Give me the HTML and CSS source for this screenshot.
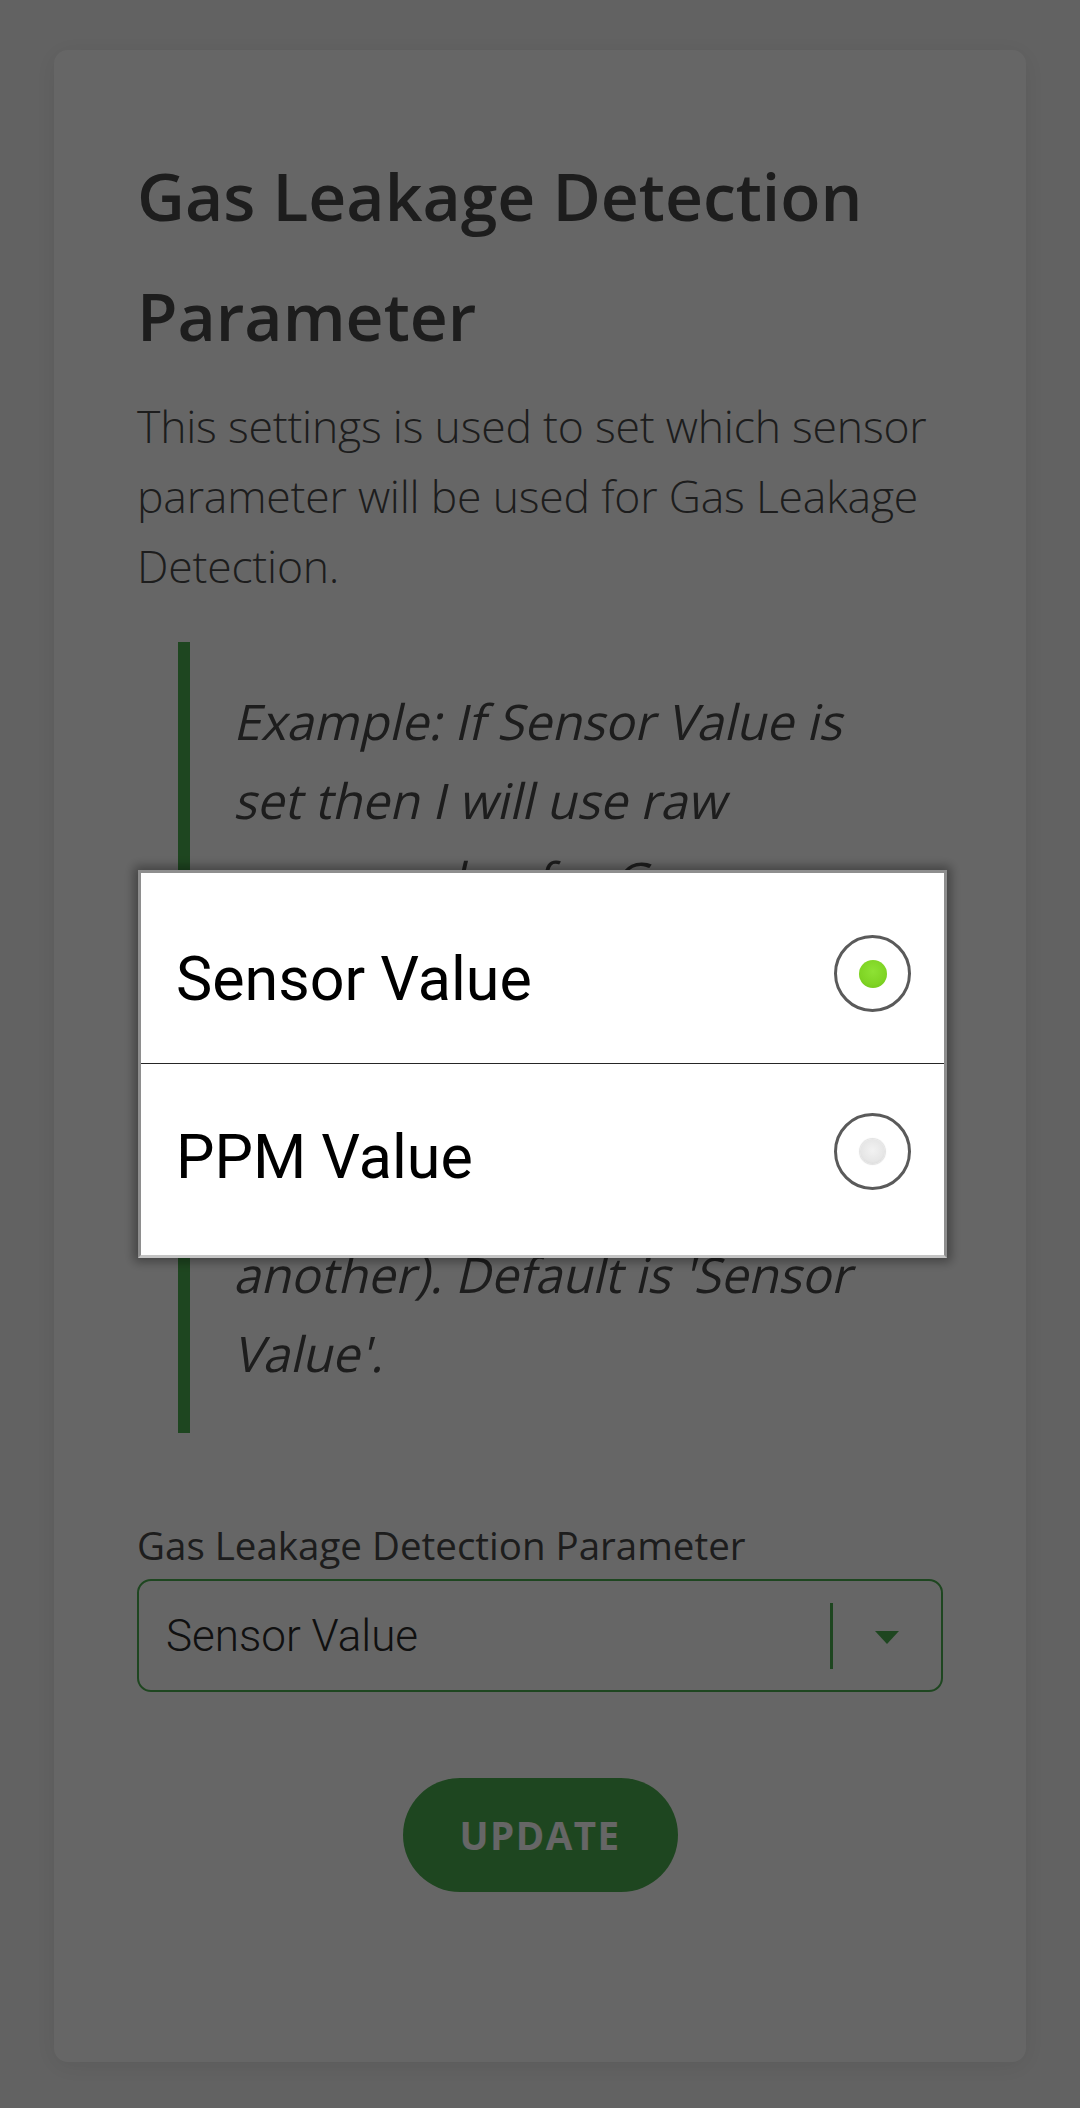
FILE: index.html
```html
<!DOCTYPE html>
<html lang="en">
<head>
<meta charset="utf-8">
<title>Gas Leakage Detection Parameter</title>
<link rel="stylesheet" href="styles.css">
</head>
<body>
<main class="page">
  <section class="card">
    <h1 class="title">Gas Leakage Detection Parameter</h1>
    <p class="lead">This settings is used to set which sensor parameter will be used for Gas Leakage Detection.</p>
    <blockquote class="note">
      <p class="note-text">
        <span class="line">Example: If Sensor Value is</span>
        <span class="line">set then I will use raw</span>
        <span class="line">sensor value for Gas</span>
        <span class="line">Leakage Detection and if</span>
        <span class="line">PPM Value is set then I will</span>
        <span class="line">use PPM value (converted</span>
        <span class="line">from one unit of gas to</span>
        <span class="line">another). Default is 'Sensor</span>
        <span class="line">Value'.</span>
      </p>
    </blockquote>
    <label class="field-label">Gas Leakage Detection Parameter</label>
    <div class="select">
      <span class="select-value">Sensor Value</span>
      <span class="select-sep"></span>
      <span class="select-arrow"></span>
    </div>
    <div class="actions">
      <button class="btn" type="button">UPDATE</button>
    </div>
  </section>
</main>
<div class="overlay">
  <div class="dialog">
    <div class="option">
      <span class="option-text">Sensor Value</span>
      <span class="radio radio-on"><span class="radio-dot"></span></span>
    </div>
    <div class="divider"></div>
    <div class="option">
      <span class="option-text">PPM Value</span>
      <span class="radio"><span class="radio-dot"></span></span>
    </div>
  </div>
</div>
</body>
</html>
```
FILE: styles.css
```css
html, body {
  margin: 0;
  padding: 0;
  height: 2108px;
  overflow: hidden;
}

body {
  background: #f5f5f5;
  font-family: "Open Sans", "Noto Sans", sans-serif;
  color: #4a4a4a;
}

.page {
  padding: 50px 54px 0;
}

.card {
  background: #ffffff;
  border-radius: 14px;
  box-shadow: 0 4px 24px rgba(0, 0, 0, 0.08);
  padding: 85px 83px 85px;
}

.title {
  margin: 0 0 16px;
  font-size: 66px;
  line-height: 120px;
  font-weight: 600;
  color: #4a4a4a;
}

.lead {
  margin: 0;
  font-size: 44.5px;
  line-height: 70px;
  font-weight: 300;
  letter-spacing: -0.2px;
}

.note {
  margin: 41px 41px 0;
  border-left: 12px solid #4caf50;
  padding: 40px 0 40px 43px;
}

.note-text {
  margin: 0;
  font-size: 49px;
  line-height: 79px;
  font-weight: 400;
}

/* synthetic oblique, like the fallback slant of the regular face */
.line {
  display: block;
  white-space: nowrap;
  transform: skewX(-13deg);
  transform-origin: 0 58px;
}

.field-label {
  display: block;
  margin-top: 85px;
  font-size: 38.5px;
  line-height: 55px;
  font-weight: 400;
}

.select {
  margin-top: 6px;
  height: 113px;
  box-sizing: border-box;
  border: 2px solid #4caf50;
  border-radius: 14px;
  display: flex;
  align-items: center;
  padding-left: 27px;
}

.select-value {
  flex: 1;
  font-family: Roboto, "Noto Sans", sans-serif;
  font-weight: 300;
  font-size: 44px;
  color: #2a2a2a;
}

.select-sep {
  width: 3px;
  height: 66px;
  background: #4caf50;
}

.select-arrow {
  width: 108px;
  display: flex;
  justify-content: center;
}

.select-arrow::before {
  content: "";
  border-top: 13px solid #4caf50;
  border-left: 12.5px solid transparent;
  border-right: 12.5px solid transparent;
  margin-top: 4px;
}

.actions {
  display: flex;
  justify-content: center;
  margin-top: 86px;
  margin-bottom: 85px;
}

.btn {
  width: 275px;
  height: 114px;
  border: none;
  border-radius: 57px;
  background: #4caf50;
  color: #ffffff;
  font-family: "Open Sans", "Noto Sans", sans-serif;
  font-weight: 700;
  font-size: 38.5px;
  letter-spacing: 1.5px;
  padding: 0;
}

/* modal dialog */
.overlay {
  position: fixed;
  inset: 0;
  background: rgba(0, 0, 0, 0.6);
  display: flex;
  justify-content: center;
  align-items: center;
  padding: 19px 0 0 5px;
}

.dialog {
  width: 803px;
  background: #ffffff;
  border: 3px solid #8e8e8e;
  border-bottom-color: #c4c4c4;
  box-shadow: 0 0 10px 4px rgba(0, 0, 0, 0.35);
  padding: 12px 0 15px;
}

.option {
  height: 178px;
  display: flex;
  align-items: center;
  justify-content: space-between;
  padding: 0 33px 0 35px;
}

.option + .divider + .option {
  height: 176px;
}

.option-text {
  font-family: Roboto, "Noto Sans", sans-serif;
  font-size: 61px;
  color: #000000;
  padding-top: 10px;
}

.divider {
  height: 1px;
  background: #262626;
}

.radio {
  width: 77px;
  height: 77px;
  box-sizing: border-box;
  border: 3px solid #5a5a5a;
  border-radius: 50%;
  background: #ffffff;
  display: flex;
  align-items: center;
  justify-content: center;
}

.radio-dot {
  width: 25px;
  height: 25px;
  border-radius: 50%;
  background: radial-gradient(circle at 50% 45%, #f2f2f2 0%, #e6e6e6 60%, #cfcfcf 100%);
  box-shadow: 0 0 1px 1px rgba(0, 0, 0, 0.12);
}

.radio-on .radio-dot {
  width: 28px;
  height: 28px;
  background: radial-gradient(circle at 50% 40%, #8ee234 0%, #7fd424 60%, #6bbf18 100%);
  box-shadow: none;
}
```
